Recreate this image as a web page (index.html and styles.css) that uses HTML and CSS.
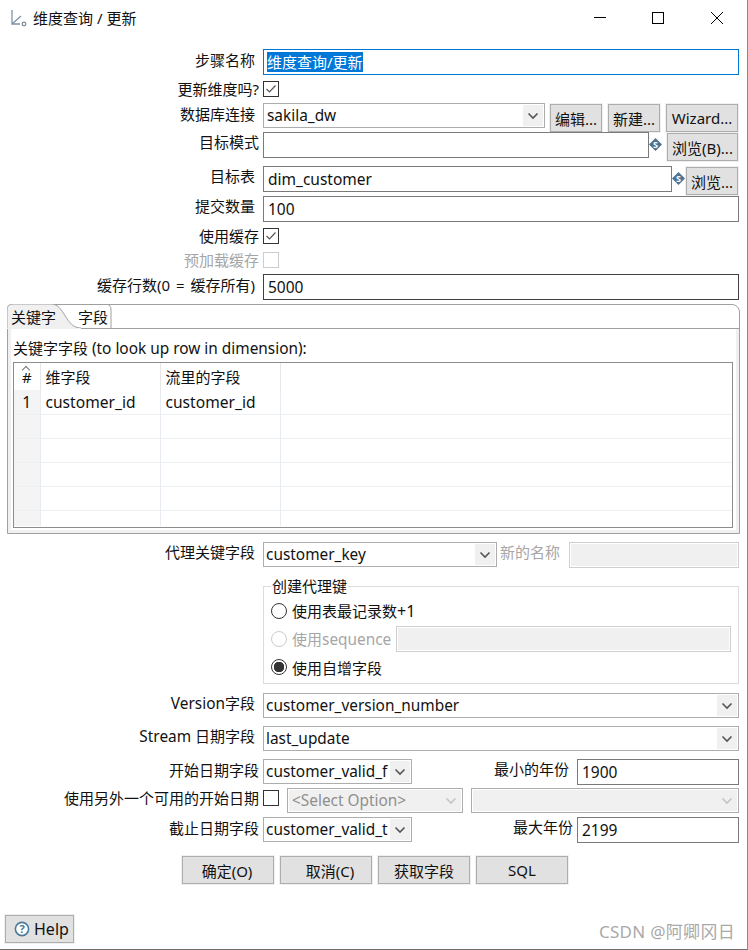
FILE: index.html
```html
<!DOCTYPE html>
<html lang="zh">
<head>
<meta charset="utf-8">
<title>维度查询 / 更新</title>
<link rel="stylesheet" href="styles.css">
</head>
<body>
<div class="window">
  <header class="titlebar">
    <svg class="app-icon" width="18" height="18" viewBox="0 0 18 18"><path d="M2 1v14h8M2 15l9-8" fill="none" stroke="#7f92a6" stroke-width="1.300"/><circle cx="14" cy="15" r="1.800" fill="none" stroke="#7d8c9c" stroke-width="1.300"/></svg>
    <span class="title">维度查询 / 更新</span>
    <svg class="ctl ctl-min" width="14" height="14" viewBox="0 0 14 14"><path d="M1 6.500h12" stroke="#000" fill="none"/></svg>
    <svg class="ctl ctl-max" width="14" height="14" viewBox="0 0 14 14"><rect x="1.500" y="1.500" width="11" height="11" stroke="#000" fill="none"/></svg>
    <svg class="ctl ctl-close" width="14" height="14" viewBox="0 0 14 14"><path d="M1 1l12 12M13 1L1 13" stroke="#000" fill="none"/></svg>
  </header>

  <div class="row h32">
    <label class="lab">步骤名称</label>
    <div class="field focus grow"><span class="sel">维度查询/更新</span></div>
  </div>
  <div class="row h22">
    <label class="lab near tight">更新维度吗?</label>
    <span class="cb"><svg width="14" height="14" viewBox="0 0 14 14"><path d="M2.500 7l3 3 6-6.500" fill="none" stroke="#555" stroke-width="1.200"/></svg></span>
  </div>
  <div class="row h29">
    <label class="lab">数据库连接</label>
    <div class="combo w282 pad3">sakila_dw<span class="arrow"><svg width="12" height="8" viewBox="0 0 12 8"><path d="M1.500 1.500L6 6l4.500-4.500" fill="none" stroke="#555" stroke-width="1.600"/></svg></span></div>
    <button class="btn b-edit">编辑...</button>
    <button class="btn b-new">新建...</button>
    <button class="btn b-wiz">Wizard...</button>
  </div>
  <div class="row h34">
    <label class="lab near up">目标模式</label>
    <div class="field w386"></div>
    <svg class="var" width="13" height="13" viewBox="0 0 13 13"><path d="M6.500 0L13 6.500 6.500 13 0 6.500z" fill="#4d7394"/><text x="6.500" y="9.500" text-anchor="middle" class="var-t">S</text></svg>
    <button class="btn b-browse-b">浏览(B)...</button>
  </div>
  <div class="row h30">
    <label class="lab up">目标表</label>
    <div class="field w409">dim_customer</div>
    <svg class="var" width="13" height="13" viewBox="0 0 13 13"><path d="M6.500 0L13 6.500 6.500 13 0 6.500z" fill="#4d7394"/><text x="6.500" y="9.500" text-anchor="middle" class="var-t">S</text></svg>
    <button class="btn b-browse">浏览...</button>
  </div>
  <div class="row h32">
    <label class="lab up">提交数量</label>
    <div class="field grow">100</div>
  </div>
  <div class="row h24">
    <label class="lab near tight">使用缓存</label>
    <span class="cb"><svg width="14" height="14" viewBox="0 0 14 14"><path d="M2.500 7l3 3 6-6.500" fill="none" stroke="#555" stroke-width="1.200"/></svg></span>
  </div>
  <div class="row h22">
    <label class="lab near tight off">预加载缓存</label>
    <span class="cb cb-off"></span>
  </div>
  <div class="row h30">
    <label class="lab spaced">缓存行数(0 = 缓存所有)</label>
    <div class="field dark grow">5000</div>
  </div>

  <section class="folder">
    <div class="tabs">
      <span class="tab tab-on">关键字</span>
      <span class="tab tab-off">字段</span>
      <svg class="tab-curve" width="106" height="25" viewBox="0 0 106 25"><path d="M0 25V6Q0 0 6 0H44C58 0 58 24 74 24" fill="#f0f0f0" stroke="#a0a0a0"/><path d="M74 24.500H0" stroke="#f0f0f0"/><path d="M98 0Q104 0 104 6V24" fill="none" stroke="#a0a0a0"/></svg>
    </div>
    <div class="pane">
      <div class="caption">关键字字段 <span class="lat">(to look up row in dimension):</span></div>
      <div class="grid-box">
        <table class="grid">
          <thead>
            <tr><th class="c-idx"><span class="caret"></span>#</th><th class="c-col">维字段</th><th class="c-col">流里的字段</th><th></th></tr>
          </thead>
          <tbody>
            <tr><td class="c-idx">1</td><td>customer_id</td><td>customer_id</td><td></td></tr>
            <tr><td class="c-idx"></td><td></td><td></td><td></td></tr>
            <tr><td class="c-idx"></td><td></td><td></td><td></td></tr>
            <tr><td class="c-idx"></td><td></td><td></td><td></td></tr>
            <tr><td class="c-idx"></td><td></td><td></td><td></td></tr>
            <tr class="last"><td class="c-idx"></td><td></td><td></td><td></td></tr>
          </tbody>
        </table>
      </div>
    </div>
  </section>

  <div class="row h34 sp8">
    <label class="lab up">代理关键字段</label>
    <div class="combo w234">customer_key<span class="arrow"><svg width="12" height="8" viewBox="0 0 12 8"><path d="M1.500 1.500L6 6l4.500-4.500" fill="none" stroke="#555" stroke-width="1.600"/></svg></span></div>
    <label class="new-name off">新的名称</label>
    <div class="field off-field grow"></div>
  </div>

  <fieldset class="group">
    <legend>创建代理键</legend>
    <div class="radio-row"><span class="radio"></span><span>使用表最记录数<span class="lat-l">+1</span></span></div>
    <div class="radio-row off"><span class="radio radio-off"></span><span>使用<span class="lat">sequence</span></span><div class="field off-field grow seq"></div></div>
    <div class="radio-row"><span class="radio radio-on"></span><span>使用自增字段</span></div>
  </fieldset>

  <div class="row h33 sp9">
    <label class="lab up"><span class="lat">Version</span>字段</label>
    <div class="combo grow">customer_version_number<span class="arrow"><svg width="12" height="8" viewBox="0 0 12 8"><path d="M1.500 1.500L6 6l4.500-4.500" fill="none" stroke="#555" stroke-width="1.600"/></svg></span></div>
  </div>
  <div class="row h33">
    <label class="lab up"><span class="lat">Stream</span> 日期字段</label>
    <div class="combo grow">last_update<span class="arrow"><svg width="12" height="8" viewBox="0 0 12 8"><path d="M1.500 1.500L6 6l4.500-4.500" fill="none" stroke="#555" stroke-width="1.600"/></svg></span></div>
  </div>
  <div class="row h29">
    <label class="lab near">开始日期字段</label>
    <div class="combo w149"><span class="clip">customer_valid_f</span><span class="arrow"><svg width="12" height="8" viewBox="0 0 12 8"><path d="M1.500 1.500L6 6l4.500-4.500" fill="none" stroke="#555" stroke-width="1.600"/></svg></span></div>
    <label class="year y-min">最小的年份</label>
    <div class="field w162">1900</div>
  </div>
  <div class="row h29">
    <label class="lab near alt">使用另外一个可用的开始日期</label>
    <span class="cb cb-alt"></span>
    <div class="combo combo-off w176">&lt;Select Option&gt;<span class="arrow"><svg width="12" height="8" viewBox="0 0 12 8"><path d="M1.500 1.500L6 6l4.500-4.500" fill="none" stroke="#c4c4c4" stroke-width="1.600"/></svg></span></div>
    <div class="combo combo-off grow gap8"><span class="arrow"><svg width="12" height="8" viewBox="0 0 12 8"><path d="M1.500 1.500L6 6l4.500-4.500" fill="none" stroke="#c4c4c4" stroke-width="1.600"/></svg></span></div>
  </div>
  <div class="row h39">
    <label class="lab near">截止日期字段</label>
    <div class="combo w149"><span class="clip">customer_valid_t</span><span class="arrow"><svg width="12" height="8" viewBox="0 0 12 8"><path d="M1.500 1.500L6 6l4.500-4.500" fill="none" stroke="#555" stroke-width="1.600"/></svg></span></div>
    <label class="year y-max">最大年份</label>
    <div class="field w162">2199</div>
  </div>

  <div class="actions">
    <button class="btn act act-ok">确定(O)</button>
    <button class="btn act act-cancel">取消(C)</button>
    <button class="btn act">获取字段</button>
    <button class="btn act">SQL</button>
  </div>

  <button class="btn help">
    <svg width="16" height="16" viewBox="0 0 16 16"><circle cx="8" cy="8" r="6.600" fill="#fff" stroke="#4b7a9b" stroke-width="1.600"/><text x="8" y="12" text-anchor="middle" class="help-q">?</text></svg>
    <span class="lat-l">Help</span>
  </button>

  <div class="watermark">CSDN @阿卿冈日</div>
</div>
</body>
</html>
```

FILE: styles.css
```css
* { box-sizing: border-box; }
html, body { margin: 0; padding: 0; background: #fff; }
body {
  font-family: "Noto Sans", "Noto Sans CJK SC", sans-serif;
  font-size: 15px;
  color: #111;
}
.lat { font-size: 15.400px; }
.lat-l { font-size: 16px; }
.window {
  position: relative;
  width: 748px;
  height: 950px;
  border-right: 1px solid #8a8a8a;
  border-bottom: 1px solid #6e6e6e;
  overflow: hidden;
}

/* title bar */
.titlebar {
  position: relative;
  display: flex;
  align-items: center;
  height: 37px;
  margin-bottom: 12px;
  padding-left: 10px;
}
.app-icon { flex: none; margin-right: 5px; margin-top: -1px; }
.title { font-size: 15px; line-height: 20px; margin-top: -2px; }
.ctl { position: absolute; top: 11px; }
.ctl-min { left: 593px; }
.ctl-max { left: 651px; }
.ctl-close { left: 710px; }

/* rows */
.row { display: flex; align-items: flex-start; width: 739px; }
.h22 { height: 22px; }
.h24 { height: 24px; }
.h29 { height: 29px; }
.h30 { height: 30px; }
.h32 { height: 32px; }
.h33 { height: 33px; }
.h34 { height: 34px; }
.h39 { height: 39px; }
.sp8 { margin-top: 8px; }
.sp9 { margin-top: 9px; }
.grow { flex: 1; }

.lab {
  flex: none;
  width: 263px;
  padding-right: 8px;
  text-align: right;
  line-height: 22px;
  white-space: nowrap;
}
.lab.near { padding-right: 4px; }
.lab.up { margin-top: -1px; }
.lab.tight { line-height: 17px; }
.lab.alt { line-height: 20px; }
.lab.spaced { word-spacing: 2px; }
.off { color: #a6a6a6; }

/* fields */
.field {
  height: 26px;
  border: 1px solid #7a7a7a;
  padding-left: 4px;
  line-height: 24px;
  white-space: nowrap;
  font-size: 15.500px;
  overflow: hidden;
}
.field.focus { border-color: #0078d7; font-size: 15px; line-height: 20px; padding: 2px 0 0 3px; }
.field.dark { border-color: #3f3f3f; }
.off-field { background: #f0f0f0; border-color: #cfcfcf; box-shadow: inset 0 0 0 1px #fff; }
.sel { display: inline-block; height: 20px; line-height: 20px; background: #0078d7; color: #fff; }
.w386 { width: 386px; }
.w409 { width: 409px; }
.w162 { width: 162px; }

.combo {
  position: relative;
  height: 25px;
  border: 1px solid #adadad;
  padding-left: 2px;
  line-height: 23px;
  white-space: nowrap;
  background: #fff;
  font-size: 15.400px;
}
.pad3 { padding-left: 3px; }
.combo-off { background: #f0f0f0; color: #8f8f8f; box-shadow: inset 0 0 0 1px #fff; padding-left: 4px; }
.gap8 { margin-left: 8px; }
.w282 { width: 282px; }
.w234 { width: 234px; }
.w149 { width: 149px; }
.w176 { width: 176px; margin-left: 8px; }
.clip { display: block; overflow: hidden; width: 125px; }
.arrow {
  position: absolute;
  top: 1px;
  right: 1px;
  bottom: 1px;
  width: 20px;
  display: flex;
  align-items: center;
  justify-content: center;
  background: #f0f0f0;
}

/* checkboxes */
.cb {
  flex: none;
  width: 16px;
  height: 16px;
  border: 1px solid #333;
  display: flex;
  align-items: center;
  justify-content: center;
  background: #fff;
}
.cb-off { border-color: #cccccc; }
.cb-alt { margin-top: 2px; }

/* buttons */
.btn {
  font: inherit;
  color: #111;
  padding: 0;
  height: 28px;
  background: #e1e1e1;
  border: 1px solid #adadad;
  box-shadow: 0 0 0 1px #f0f0f0;
  white-space: nowrap;
}
.b-edit { width: 52px; margin: 1px 0 0 5px; }
.b-new { width: 52px; margin: 1px 0 0 6px; }
.b-wiz { width: 72px; margin: 1px 0 0 6px; }
.b-browse-b { width: 71px; margin: 1px 0 0 5px; }
.b-browse { width: 52px; margin: 1px 0 0 1px; }
.var { flex: none; margin: 6px 0 0 0; }
.var-t { font-size: 9px; font-weight: 700; fill: #fff; font-family: "Noto Sans", sans-serif; }

/* tab folder */
.folder {
  width: 733px;
  height: 230px;
  margin-left: 7px;
  border: 1px solid #a0a0a0;
  border-radius: 8px 8px 0 0;
  display: flex;
  flex-direction: column;
}
.tabs {
  position: relative;
  flex: none;
  height: 24px;
  display: flex;
  border-bottom: 1px solid #a0a0a0;
}
.tab { position: relative; z-index: 1; line-height: 25px; }
.tab-on { margin-left: 3px; }
.tab-off { margin-left: 22px; }
.tab-curve { position: absolute; left: -1px; top: -1px; }
.pane {
  flex: 1;
  border: solid #f0f0f0;
  border-width: 0 3px 3px 3px;
  padding: 9px 3px 0 2px;
}
.caption { line-height: 20px; height: 24px; white-space: nowrap; }
.grid-box {
  width: 720px;
  height: 166px;
  border: 1px solid #8c8c8c;
  overflow: hidden;
}
.grid { width: 718px; border-collapse: collapse; table-layout: fixed; }
.grid th, .grid td {
  padding: 0 0 0 5px;
  font-weight: 400;
  text-align: left;
  border-right: 1px solid #e8ecf2;
  border-bottom: 1px solid #eceff4;
  height: 24px;
  white-space: nowrap;
  font-size: 15.600px;
}
.grid th { height: 27px; border-bottom: 0; font-size: 15px; padding-bottom: 1px; border-right-color: #e6e6e6; }
.grid td:last-child, .grid th:last-child { border-right: 0; }
.grid .c-idx { width: 26px; padding: 0; text-align: center; background: #f4f4f4; position: relative; }
.grid th.c-idx { background: #fff; }
.grid th:nth-child(2), .grid th:nth-child(3) { width: 120px; }
.grid .last td { height: 16px; border-bottom: 0; }
.caret {
  position: absolute;
  left: 9px;
  top: 4px;
  width: 6px;
  height: 6px;
  border: solid #777;
  border-width: 1px 0 0 1px;
  transform: rotate(45deg);
}

/* surrogate key */
.new-name { flex: none; width: 61px; margin: 0 8px 0 3px; line-height: 20px; white-space: nowrap; }
.group {
  width: 476px;
  height: 108px;
  margin: 0 0 0 263px;
  padding: 1px 7px 0;
  border: 1px solid #dcdcdc;
  min-width: 0;
}
.group legend { padding: 0 1px; margin-left: 0; line-height: 20px; }
.radio-row { display: flex; align-items: center; height: 28px; gap: 5px; white-space: nowrap; }
.radio {
  flex: none;
  width: 16px;
  height: 16px;
  border: 1px solid #333;
  border-radius: 50%;
  background: #fff;
}
.radio-off { border-color: #cccccc; }
.radio-on { background: radial-gradient(circle, #333 0 5px, #fff 5.500px); }
.seq { height: 26px; }

/* year labels */
.year { flex: 1; text-align: right; line-height: 20px; }
.y-min { padding-right: 8px; }
.y-max { padding-right: 4px; }

/* action buttons */
.actions { display: flex; gap: 6px; margin-left: 182px; }
.act { width: 92px; }
.act-ok { padding-right: 2px; }
.act-cancel { padding-left: 8px; }

.help {
  display: flex;
  align-items: center;
  gap: 4px;
  width: 69px;
  height: 28px;
  margin: 31px 0 0 5px;
  padding-left: 8px;
}
.help-q { font-size: 11px; font-weight: 700; fill: #4b7a9b; font-family: "Noto Sans", sans-serif; }

.watermark {
  position: absolute;
  right: 12px;
  top: 921px;
  font-size: 17px;
  letter-spacing: 0.300px;
  line-height: 22px;
  color: #a9a9a9;
  white-space: nowrap;
}
```
